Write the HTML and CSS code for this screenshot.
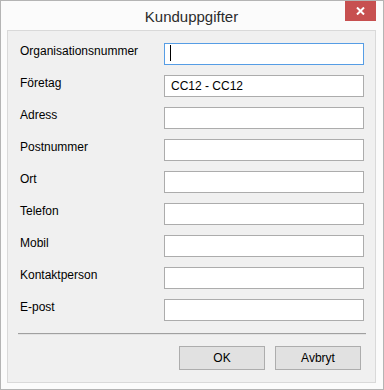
FILE: index.html
```html
<!DOCTYPE html>
<html lang="sv">

<head>
  <meta charset="UTF-8">
  <meta name="viewport" content="width=device-width, initial-scale=1.0">
  <title>Kunduppgifter</title>
  <link rel="stylesheet" href="styles.css">
</head>

<body>
  <div class="window">
    <div class="titlebar">
      <span class="title">Kunduppgifter</span>
      <button class="btn-close" type="button">
        <svg width="9" height="8" viewBox="0 0 9 8">
          <path d="M1 0.5 L8 7.5 M8 0.5 L1 7.5" stroke="#fff" stroke-width="2" fill="none" />
        </svg>
      </button>
    </div>

    <div class="client">
      <form class="form">
        <div class="row">
          <label>Organisationsnummer</label>
          <div class="field-wrap">
            <input class="field focused" type="text" value="">
            <span class="caret"></span>
          </div>
        </div>
        <div class="row">
          <label>Företag</label>
          <input class="field" type="text" value="CC12 - CC12">
        </div>
        <div class="row">
          <label>Adress</label>
          <input class="field" type="text">
        </div>
        <div class="row">
          <label>Postnummer</label>
          <input class="field" type="text">
        </div>
        <div class="row">
          <label>Ort</label>
          <input class="field" type="text">
        </div>
        <div class="row">
          <label>Telefon</label>
          <input class="field" type="text">
        </div>
        <div class="row">
          <label>Mobil</label>
          <input class="field" type="text">
        </div>
        <div class="row">
          <label>Kontaktperson</label>
          <input class="field" type="text">
        </div>
        <div class="row">
          <label>E-post</label>
          <input class="field" type="text">
        </div>
      </form>

      <div class="separator"></div>

      <div class="buttons">
        <button class="btn" type="button">OK</button>
        <button class="btn" type="button">Avbryt</button>
      </div>
    </div>
  </div>
</body>

</html>
```

FILE: styles.css
```css
html,
body {
  margin: 0;
  padding: 0;
  background: #fcfcfc;
}

.window {
  width: 384px;
  height: 390px;
  box-sizing: border-box;
  border: 1px solid #b4b4b4;
  background: #fbfbfb;
  padding: 0 7px 6px 6px;
  font-family: "Liberation Sans", Arial, sans-serif;
  font-size: 12px;
  color: #000;
}

.titlebar {
  position: relative;
  height: 29px;
  display: flex;
  align-items: center;
  justify-content: center;
}

.title {
  font-size: 15px;
  color: #2b2b2b;
  margin-top: 1px;
}

.btn-close {
  position: absolute;
  top: 0;
  right: 0;
  width: 31px;
  height: 20px;
  margin: 0;
  padding: 0;
  border: none;
  background: #c75050;
  display: flex;
  align-items: center;
  justify-content: center;
}

.client {
  height: 353px;
  box-sizing: border-box;
  border: 1px solid #d9d9d9;
  background: #f0f0f0;
  padding: 12px 11px 0 12px;
}

.form {
  display: flex;
  flex-direction: column;
  gap: 10px;
  margin: 0;
}

.row {
  display: flex;
  align-items: flex-start;
  height: 22px;
}

.row label {
  width: 144px;
  line-height: 16px;
}

.field-wrap {
  position: relative;
  width: 200px;
  height: 22px;
}

.field {
  width: 200px;
  height: 22px;
  box-sizing: border-box;
  margin: 0;
  padding: 0 6px;
  border: 1px solid #acacac;
  background: #fff;
  font-family: "Liberation Sans", Arial, sans-serif;
  font-size: 12px;
  color: #000;
  outline: none;
}

.field.focused {
  border-color: #569de5;
}

.caret {
  position: absolute;
  left: 6px;
  top: 2px;
  width: 1px;
  height: 16px;
  background: #000;
}

.separator {
  margin: 12px -2px 0 -2px;
  border-top: 1px solid #a0a0a0;
  border-bottom: 1px solid #e3e3e3;
}

.buttons {
  display: flex;
  justify-content: flex-end;
  gap: 10px;
  margin-top: 11px;
  padding-right: 3px;
}

.btn {
  width: 86px;
  height: 24px;
  margin: 0;
  padding: 0;
  border: 1px solid #adadad;
  background: #e1e1e1;
  font-family: "Liberation Sans", Arial, sans-serif;
  font-size: 12px;
  color: #000;
}
```
